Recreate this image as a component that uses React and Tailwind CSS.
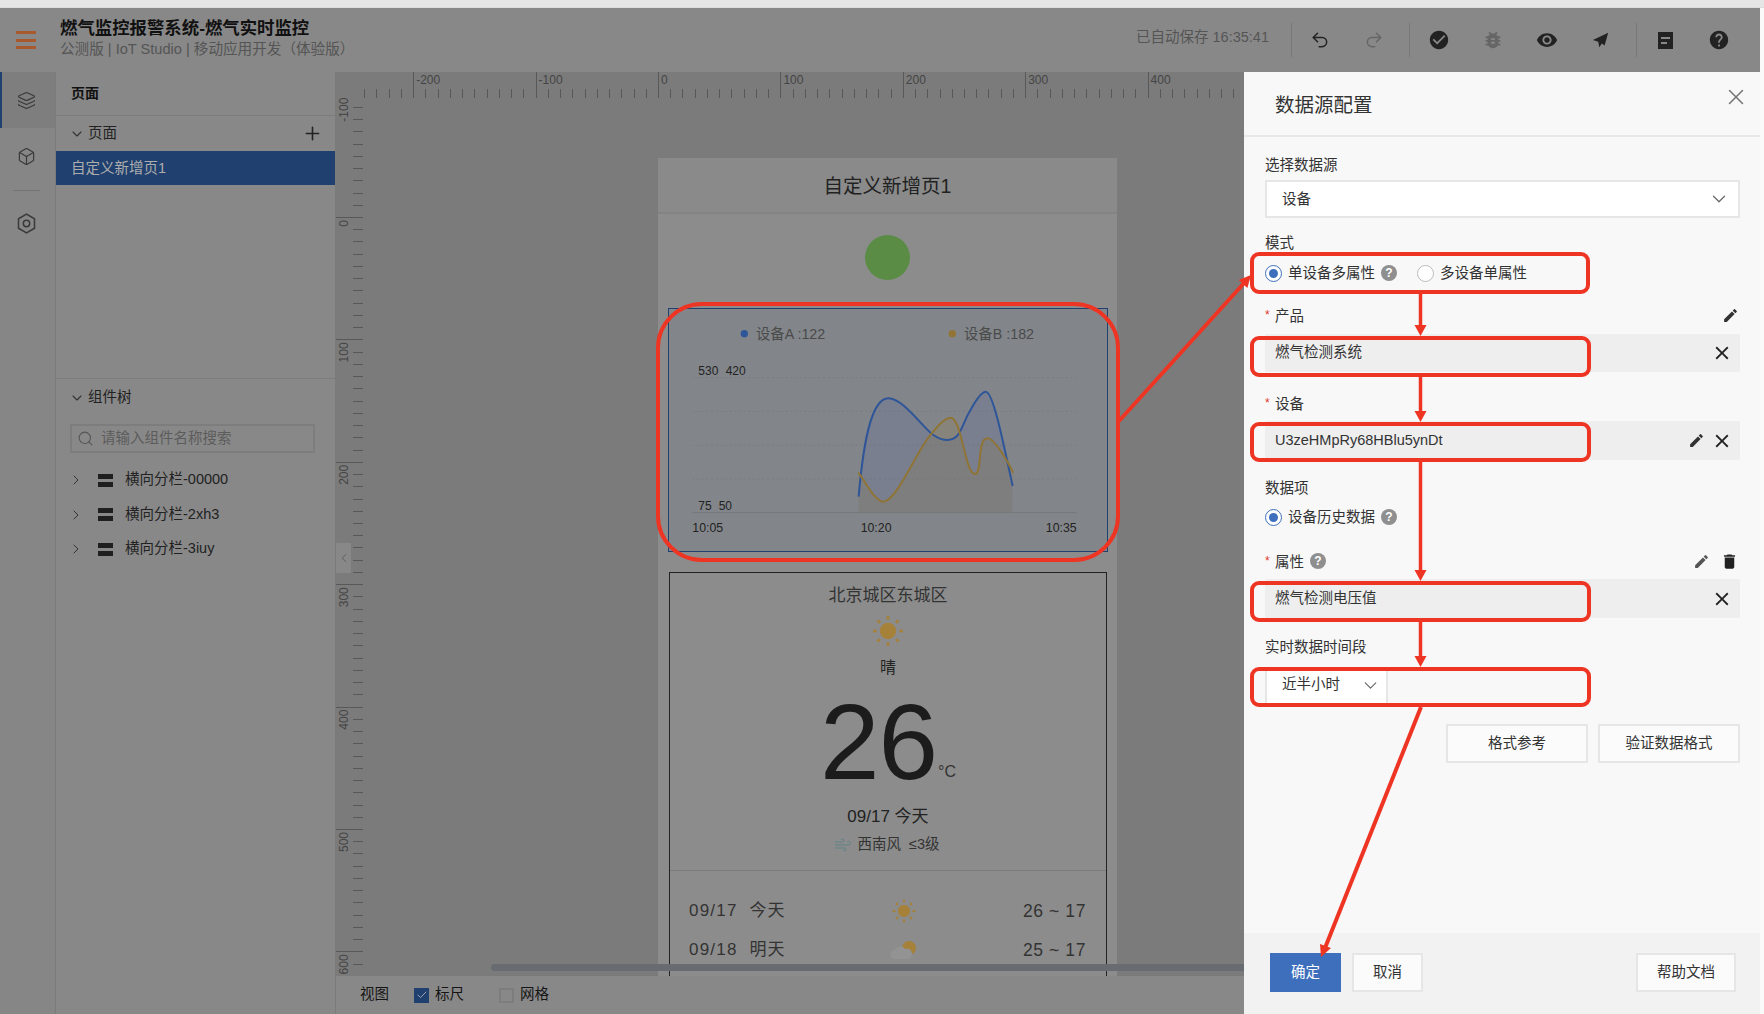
import React from 'react';
import { Undo2, Redo2, Layers, Box, ChevronDown, ChevronRight, ChevronLeft, Search, Plus, Wind, Check, X } from 'lucide-react';
import { MdCheckCircle, MdBugReport, MdRemoveRedEye, MdHelp, MdEdit, MdDelete, MdClose } from 'react-icons/md';

const Sun = ({ size = 32 }) => {
  const rays = [0, 45, 90, 135, 180, 225, 270, 315];
  return (
    <svg width={size} height={size} viewBox="0 0 32 32">
      <circle cx="16" cy="16" r="8.2" fill="#a5813a" />
      {rays.map((a) => (
        <rect key={a} x="14.7" y="1" width="2.6" height="3.6" fill="#a5813a" transform={`rotate(${a} 16 16)`} />
      ))}
    </svg>
  );
};

const Cloud = () => (
  <svg width="28" height="20" viewBox="0 0 28 20">
    <circle cx="19" cy="8" r="7" fill="#a5813a" />
    <path d="M5 19a4.5 4.5 0 0 1 0-9c1-4 8-5 10-1 4-1 7 1 7 5 0 3-2 5-4 5z" fill="#939393" />
  </svg>
);

const TopRuler = () => {
  const ticks = [];
  for (let i = -24; i <= 47; i++) ticks.push(i);
  return (
    <svg width="882" height="26" viewBox="363 72 882 26" className="block">
      {ticks.map((i) => {
        const x = Math.round(658 + i * 12.24) + 0.5;
        const major = i % 10 === 0;
        return <line key={i} x1={x} x2={x} y1={major ? 72 : 89} y2="98" stroke="#585858" strokeWidth="1" />;
      })}
      {[-200, -100, 0, 100, 200, 300, 400].map((v) => (
        <text key={v} x={658 + v * 1.224 + 3} y="84" fontSize="12" fill="#444">{v}</text>
      ))}
    </svg>
  );
};

const LeftRuler = () => {
  const ticks = [];
  for (let i = -9; i <= 62; i++) ticks.push(i);
  return (
    <svg width="28" height="878" viewBox="335 98 28 878" className="block shrink-0">
      {ticks.map((i) => {
        const y = Math.round(217 + i * 12.24) + 0.5;
        const major = i % 10 === 0;
        return <line key={i} y1={y} y2={y} x1={major ? 336 : 353} x2="363" stroke="#585858" strokeWidth="1" />;
      })}
      {[-100, 0, 100, 200, 300, 400, 500, 600].map((v) => {
        const y = 217 + v * 1.224 + 3;
        return (
          <text key={v} x="348" y={y} fontSize="12" fill="#444" textAnchor="end" transform={`rotate(-90 348 ${y})`}>{v}</text>
        );
      })}
    </svg>
  );
};

const BLUE = 'M656 1040 C668 900 690 745 745 745 C790 745 850 835 880 855 C905 872 945 885 965 835 C985 785 1020 725 1037 725 C1060 725 1090 880 1118 1008';
const GOLD = 'M655 968 C680 1000 705 1055 730 1055 C770 1055 830 900 875 850 C895 825 915 803 932 803 C965 803 975 972 1005 972 C1028 972 1010 865 1042 865 C1065 865 1100 930 1120 968';

const Chart = () => (
  <svg viewBox="84 474 1320 732" className="block w-[440px] h-[244px] ml-[10px] mt-[28px] bg-[#82868a] outline outline-[#20406f] -outline-offset-1">
    <circle cx="313" cy="551" r="11" fill="#2f5599" />
    <text x="348" y="566" fontSize="43" fill="#4a4a4a">设备A :122</text>
    <circle cx="937" cy="551" r="11" fill="#927436" />
    <text x="972" y="566" fontSize="43" fill="#4a4a4a">设备B :182</text>
    {[683, 784, 886, 987].map((y) => (
      <line key={y} x1="157" x2="1310" y1={y} y2={y} stroke="#75787a" strokeWidth="2" strokeDasharray="6 8" />
    ))}
    <line x1="157" x2="1310" y1="1088" y2="1088" stroke="#767879" strokeWidth="3" />
    <path d={`${BLUE} L1116 1087 L656 1087 Z`} fill="#3a55a8" fillOpacity="0.13" />
    <path d={`${GOLD} L1116 1087 L656 1087 Z`} fill="#9a7a30" fillOpacity="0.16" />
    <path d={BLUE} fill="none" stroke="#2f5599" strokeWidth="6" />
    <path d={GOLD} fill="none" stroke="#8f7436" strokeWidth="6" />
    <text x="175" y="674" fontSize="36" fill="#222">530</text>
    <text x="257" y="674" fontSize="36" fill="#222">420</text>
    <text x="175" y="1080" fontSize="36" fill="#222">75</text>
    <text x="236" y="1080" fontSize="36" fill="#222">50</text>
    <text x="157" y="1147" fontSize="37" fill="#222">10:05</text>
    <text x="662" y="1145" fontSize="37" fill="#222">10:20</text>
    <text x="1310" y="1147" fontSize="37" fill="#222" textAnchor="end">10:35</text>
  </svg>
);

const Weather = () => (
  <div className="ml-[11px] mr-[10px] mt-[20px] h-[420px] border border-b-0 border-[#222] flex flex-col items-center text-[#222]">
    <div className="mt-[11px] h-[24px] leading-[24px] text-[17px] text-[#333]">北京城区东城区</div>
    <div className="mt-[7px] h-[32px]"><Sun /></div>
    <div className="mt-[9px] h-[24px] leading-[24px] text-[16px]">晴</div>
    <div className="mt-[16px] h-[92px] flex items-end">
      <span className="text-[107px] leading-[92px] text-[#1c1c1c] tracking-[-1px]">26</span>
      <span className="text-[16px] leading-[20px] ml-[1px] mb-[6px] text-[#333]">°C</span>
    </div>
    <div className="mt-[17px] h-[24px] leading-[24px] text-[17px]">09/17 今天</div>
    <div className="mt-[6px] h-[20px] flex items-center text-[14.5px] text-[#333] -ml-[2px]">
      <Wind size={18} strokeWidth={1.3} color="#5f8288" />
      <span className="ml-[5px]">西南风</span>
      <span className="ml-[8px]">≤3级</span>
    </div>
    <div className="mt-[15px] w-full border-t border-[#7c7c7c]" />
    <div className="w-full pl-[19px] pr-[20px] mt-[28px] text-[#333]">
      <div className="flex items-center h-[24px]">
        <div className="w-[200px] text-[17px] whitespace-pre tracking-[1.2px]">09/17  今天</div>
        <div className="w-[30px] flex justify-center"><Sun size={24} /></div>
        <div className="flex-1 text-right text-[17.5px] tracking-[0.6px]">26 ~ 17</div>
      </div>
      <div className="flex items-center h-[24px] mt-[15px]">
        <div className="w-[200px] text-[17px] whitespace-pre tracking-[1.2px]">09/18  明天</div>
        <div className="w-[30px] flex justify-center"><Cloud /></div>
        <div className="flex-1 text-right text-[17.5px] tracking-[0.6px]">25 ~ 17</div>
      </div>
    </div>
  </div>
);

const Radio = ({ on }) => (
  <span className={`w-[17px] h-[17px] rounded-full border flex items-center justify-center bg-white shrink-0 ${on ? 'border-[#3d6fbd]' : 'border-[#bbb]'}`}>
    {on && <span className="w-[9px] h-[9px] rounded-full bg-[#3d6fbd]" />}
  </span>
);

const Help = () => (
  <span className="w-[16px] h-[16px] rounded-full bg-[#8f8f8f] text-white text-[12px] font-bold leading-[16px] text-center shrink-0">?</span>
);

const Label = ({ children, star, right, help, className }) => (
  <div className={`h-[20px] flex items-center text-[14.5px] leading-[20px] text-[#333] ${className}`}>
    {star && <span className="text-[#e0392b] w-[10px] text-[12px] leading-[14px]">*</span>}
    <span className="translate-y-[1px]">{children}</span>
    {help && <span className="ml-[6px] flex"><Help /></span>}
    <span className="ml-auto flex items-center gap-[10px] mr-[1px]">{right}</span>
  </div>
);

const Field = ({ children, h, className, pencil }) => (
  <div className={`flex items-center bg-[#eeeeee] rounded-[2px] pl-[10px] pr-[7px] text-[14.5px] text-[#333] ${h} ${className}`}>
    <span>{children}</span>
    {pencil && <MdEdit size={17} className="ml-auto mr-[6px] text-[#333]" />}
    <MdClose size={22} className={`text-[#222] ${pencil ? '' : 'ml-auto'}`} />
  </div>
);

const Btn = ({ children, className }) => (
  <div className={`h-[39px] flex items-center justify-center border-2 border-[#e6e6e6] bg-[#fbfbfb] text-[14.5px] text-[#333] ${className}`}>{children}</div>
);

const Drawer = () => (
  <aside className="w-[516px] shrink-0 bg-[#f8f8f8] flex flex-col">
    <div className="h-[65px] flex items-center pl-[31px] pr-[11px] border-b-2 border-[#e8e8e8] text-[19.5px] text-[#333]">
      <span className="mt-[5px]">数据源配置</span>
      <X size={26} strokeWidth={1.4} className="ml-auto mb-[13px] text-[#777]" />
    </div>
    <div className="flex-1 pl-[21px] pr-[20px]">
      <Label className="mt-[17px]">选择数据源</Label>
      <div className="mt-[6px] h-[38px] flex items-center pl-[15px] pr-[8px] bg-white border-2 border-[#e6e6e6] text-[14.5px] text-[#333]">
        <span className="translate-y-[1px]">设备</span>
        <ChevronDown size={22} strokeWidth={1.3} className="ml-auto text-[#666]" />
      </div>
      <Label className="mt-[14px]">模式</Label>
      <div className="mt-[11px] h-[20px] flex items-center text-[14.5px] text-[#333]">
        <Radio on />
        <span className="ml-[6px] translate-y-[1px]">单设备多属性</span>
        <span className="ml-[6px] flex"><Help /></span>
        <span className="ml-[20px] flex"><Radio /></span>
        <span className="ml-[6px] translate-y-[1px]">多设备单属性</span>
      </div>
      <Label star className="mt-[22px]" right={<MdEdit size={17} className="text-[#333]" />}>产品</Label>
      <Field h="h-[38px]" className="mt-[9px]">燃气检测系统</Field>
      <Label star className="mt-[21px]">设备</Label>
      <Field h="h-[39px]" className="mt-[8px]" pencil>U3zeHMpRy68HBlu5ynDt</Field>
      <Label className="mt-[17px]">数据项</Label>
      <div className="mt-[10px] h-[20px] flex items-center text-[14.5px] text-[#333]">
        <Radio on />
        <span className="ml-[6px] translate-y-[1px]">设备历史数据</span>
        <span className="ml-[6px] flex"><Help /></span>
      </div>
      <Label star help className="mt-[24px]" right={<><MdEdit size={17} className="text-[#555]" /><MdDelete size={19} className="text-[#222]" /></>}>属性</Label>
      <Field h="h-[39px]" className="mt-[8px]">燃气检测电压值</Field>
      <Label className="mt-[18px]">实时数据时间段</Label>
      <div className="mt-[13px] h-[35px] w-[123px] flex items-center pl-[15px] pr-[5px] pb-[3px] bg-white border-x-2 border-[#e6e6e6] text-[14.5px] text-[#333]">
        <span>近半小时</span>
        <ChevronDown size={21} strokeWidth={1.3} className="ml-auto text-[#666]" />
      </div>
      <div className="mt-[20px] flex justify-end gap-[10px]">
        <Btn className="w-[142px]">格式参考</Btn>
        <Btn className="w-[142px]">验证数据格式</Btn>
      </div>
    </div>
    <div className="h-[81px] bg-[#f2f2f2] pt-[20px] pl-[26px] pr-[24px] flex items-start gap-[11px]">
      <div className="w-[71px] h-[39px] flex items-center justify-center bg-[#3d6fbd] text-white text-[14.5px]">确定</div>
      <Btn className="w-[71px]">取消</Btn>
      <Btn className="w-[100px] ml-auto">帮助文档</Btn>
    </div>
  </aside>
);

const TreeRow = ({ children }) => (
  <div className="h-[34.5px] flex items-center pl-[12px] text-[14.5px] text-[#222]">
    <ChevronRight size={16} strokeWidth={1.5} className="text-[#333]" />
    <span className="ml-[14px] w-[15px] h-[13px] flex flex-col justify-between">
      <span className="block h-[5px] bg-[#1f1f1f]" />
      <span className="block h-[5px] bg-[#1f1f1f]" />
    </span>
    <span className="ml-[12px]">{children}</span>
  </div>
);

const Sidebar = () => (
  <aside className="w-[279px] shrink-0 bg-[#888888] flex flex-col">
    <div className="h-[44px] flex items-center pl-[15px] border-b border-[#7d7d7d] text-[14px] font-bold text-[#111]">页面</div>
    <div className="h-[35px] flex items-center pl-[13px] pr-[12px] text-[14.5px] text-[#222]">
      <ChevronDown size={16} strokeWidth={1.6} className="text-[#333]" />
      <span className="ml-[3px]">页面</span>
      <Plus size={21} strokeWidth={1.8} className="ml-auto text-[#222]" />
    </div>
    <div className="h-[34px] flex items-center pl-[15px] pt-[1px] bg-[#20406f] text-[14.5px] text-[#adadad]">自定义新增页1</div>
    <div className="h-[194px] border-b border-[#7d7d7d]" />
    <div className="h-[36px] flex items-center pl-[13px] pt-[1px] text-[14.5px] text-[#222]">
      <ChevronDown size={16} strokeWidth={1.6} className="text-[#333]" />
      <span className="ml-[3px]">组件树</span>
    </div>
    <div className="mt-[9px] ml-[14px] w-[245px] h-[29px] flex items-center pl-[5px] border-2 border-[#7d7d7d] text-[14.5px] text-[#5c5c5c]">
      <Search size={17} strokeWidth={1.5} className="text-[#555]" />
      <span className="ml-[7px]">请输入组件名称搜索</span>
    </div>
    <div className="mt-[10px]">
      <TreeRow>横向分栏-00000</TreeRow>
      <TreeRow>横向分栏-2xh3</TreeRow>
      <TreeRow>横向分栏-3iuy</TreeRow>
    </div>
  </aside>
);

const Rail = () => (
  <nav className="w-[56px] shrink-0 bg-[#868686] border-r border-[#7b7b7b] flex flex-col items-center pr-[2px] text-[#3a3a3a]">
    <div className="w-[55px] -mr-[2px] h-[56px] bg-[#7e7e7e] border-l-2 border-[#20406f] flex items-center justify-center pr-[5px]">
      <Layers size={19} strokeWidth={1.5} />
    </div>
    <div className="h-[56px] flex items-center"><Box size={19} strokeWidth={1.5} /></div>
    <div className="w-[27px] border-t border-[#737373] mt-[6px]" />
    <div className="h-[64px] flex items-center">
      <svg width="19" height="21" viewBox="0 0 19 21" fill="none" stroke="currentColor" strokeWidth="1.5">
        <path d="M9.5 1.2 17.5 5.8V15.2L9.5 19.8 1.5 15.2V5.8Z" />
        <circle cx="9.5" cy="10.5" r="3.2" />
      </svg>
    </div>
  </nav>
);

const HIcon = ({ children, w = 'w-[54px]' }) => (
  <span className={`${w} flex justify-center shrink-0`}>{children}</span>
);

const Header = () => (
  <header className="h-[64px] bg-[#888888] flex items-center shrink-0">
    <div className="w-[60px] pl-[16px] shrink-0">
      <div className="w-[20px] h-[18px] flex flex-col justify-between">
        <span className="block h-[3px] bg-[#a8592d]" />
        <span className="block h-[3px] bg-[#a8592d]" />
        <span className="block h-[3px] bg-[#a8592d]" />
      </div>
    </div>
    <div className="flex flex-col -mt-[5px]">
      <div className="text-[17.4px] leading-[22px] font-bold text-[#111]">燃气监控报警系统-燃气实时监控</div>
      <div className="text-[14.6px] leading-[20px] text-[#555]">公测版 | IoT Studio | 移动应用开发（体验版）</div>
    </div>
    <div className="ml-auto flex items-center text-[#222] pr-[15px]">
      <span className="text-[14.5px] text-[#555] mr-[22px] -mt-[4px]">已自动保存 16:35:41</span>
      <div className="h-[34px] border-l border-[#787878]" />
      <div className="w-[117px] flex items-center pl-[1px]">
        <HIcon><Undo2 size={20} strokeWidth={1.8} /></HIcon>
        <HIcon><Redo2 size={20} strokeWidth={1.8} className="text-[#666]" /></HIcon>
      </div>
      <div className="h-[34px] border-l border-[#787878]" />
      <div className="w-[226px] flex items-center pl-[2px]">
        <HIcon><MdCheckCircle size={22} /></HIcon>
        <HIcon><MdBugReport size={22} className="text-[#666]" /></HIcon>
        <HIcon><MdRemoveRedEye size={22} /></HIcon>
        <HIcon><svg width="18" height="18" viewBox="0 0 20 20" fill="currentColor"><path d="M18 2 1 10l6 2 1 6 3-4 3 2z" /></svg></HIcon>
      </div>
      <div className="h-[34px] border-l border-[#787878]" />
      <div className="flex items-center pl-[2px]">
        <HIcon w="w-[53px]"><svg width="15" height="17" viewBox="0 0 15 17"><rect width="15" height="17" fill="#222" /><rect x="3" y="5" width="9" height="2" fill="#888" /><rect x="3" y="10" width="6" height="2" fill="#888" /></svg></HIcon>
        <HIcon w="w-[53px]"><MdHelp size={22} /></HIcon>
      </div>
    </div>
  </header>
);

const Phone = () => (
  <div className="w-[459px] h-[818px] ml-[295px] mt-[60px] bg-[#8c8c8c] overflow-hidden">
    <div className="h-[56px] bg-[#8a8a8a] border-b-2 border-[#838383] flex items-center justify-center text-[#222]">
      <span className="text-[19.5px] mt-[3px]">自定义新增页1</span>
    </div>
    <div className="mt-[21px] mx-auto w-[45px] h-[45px] rounded-full bg-[#5a8c46]" />
    <Chart />
    <Weather />
  </div>
);

const Canvas = () => (
  <main className="flex-1 min-w-0 flex flex-col">
    <div className="flex-1 min-h-0 flex flex-col bg-[#7b7b7b] overflow-hidden relative">
      <div className="h-[26px] pl-[28px] shrink-0"><TopRuler /></div>
      <div className="flex flex-1 min-h-0">
        <LeftRuler />
        <Phone />
      </div>
      <div className="absolute left-[1px] top-[471px] w-[15px] h-[30px] bg-[#888888] flex items-center justify-center">
        <ChevronLeft size={14} strokeWidth={1.4} className="text-[#555]" />
      </div>
      <div className="absolute left-[156px] right-0 top-[892px] h-[7px] rounded-l-[4px] bg-[#686b70]" />
    </div>
    <div className="h-[38px] shrink-0 bg-[#888888] border-l border-[#7b7b7b] flex items-center pl-[24px] text-[14.5px] text-[#151515]">
      <span>视图</span>
      <span className="ml-[25px] w-[15px] h-[15px] bg-[#20406f] flex items-center justify-center"><Check size={12} strokeWidth={1.6} className="text-[#b9b9b9]" /></span>
      <span className="ml-[6px]">标尺</span>
      <span className="ml-[35px] w-[15px] h-[15px] border-2 border-[#7d7d7d]" />
      <span className="ml-[6px]">网格</span>
    </div>
  </main>
);

const RED = '#ee3524';
const Annotations = () => {
  const boxes = [
    [1252, 254, 336, 38],
    [1252, 338, 337, 37],
    [1252, 424, 337, 36],
    [1252, 583, 337, 37],
    [1252, 669, 337, 36],
  ];
  const vs = [[294, 336], [377, 422], [462, 581], [622, 667]];
  return (
    <svg width="1764" height="1014" viewBox="0 0 1764 1014" className="absolute left-0 top-0 pointer-events-none">
      <rect x="658" y="304" width="460" height="256" rx="44" fill="none" stroke={RED} strokeWidth="4" />
      {boxes.map((b, i) => (
        <rect key={i} x={b[0]} y={b[1]} width={b[2]} height={b[3]} rx="7" fill="none" stroke={RED} strokeWidth="4" />
      ))}
      {vs.map((v, i) => (
        <g key={i}>
          <line x1="1420.5" x2="1420.5" y1={v[0]} y2={v[1] - 8} stroke={RED} strokeWidth="3.5" />
          <polygon points={`1414.5,${v[1] - 11} 1426.5,${v[1] - 11} 1420.5,${v[1]}`} fill={RED} />
        </g>
      ))}
      <line x1="1119" y1="421" x2="1245" y2="282" stroke={RED} strokeWidth="4" />
      <polygon points="1251,275 1247.4,288 1238.6,280" fill={RED} />
      <line x1="1421" y1="707" x2="1325" y2="948" stroke={RED} strokeWidth="4" />
      <polygon points="1321,957 1331,948 1320,944" fill={RED} />
    </svg>
  );
};

export default function App() {
  return (
    <div className="relative w-[1764px] h-[1014px] overflow-hidden flex flex-col bg-[#fafafa] font-['Liberation_Sans','Noto_Sans_CJK_SC',sans-serif]">
      <div className="h-[8px] shrink-0 bg-[#e6e6e6] border-b border-[#dddddd]" />
      <div className="flex-1 min-h-0 w-[1760px] flex flex-col">
        <Header />
        <div className="flex-1 min-h-0 flex">
          <Rail />
          <Sidebar />
          <Canvas />
          <Drawer />
        </div>
      </div>
      <Annotations />
    </div>
  );
}
